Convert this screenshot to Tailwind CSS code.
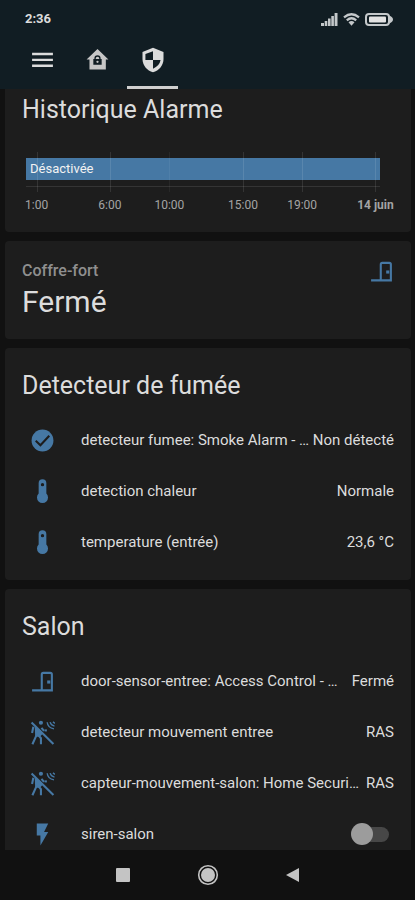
<!DOCTYPE html>
<html lang="fr">
<head>
<meta charset="utf-8">
<meta name="viewport" content="width=device-width, initial-scale=1">
<title>Alarme</title>
<script src="https://cdn.jsdelivr.net/npm/@tailwindcss/browser@4"></script>
</head>
<body class="flex h-screen flex-col overflow-hidden bg-[#111111] font-[Roboto,sans-serif] text-[15px] text-[#dcdcdc]">

<!-- Icon symbols -->
<svg class="hidden" aria-hidden="true">
  <symbol id="door" viewBox="0 0 24 24"><path fill="none" stroke="currentColor" stroke-width="2" d="M2 20.500H22M11.300 20V5.200Q11.300 3.700 12.800 3.700H19.500Q21 3.700 21 5.200V20"/><path fill="currentColor" d="M16.500 11h3v3h-3z"/></symbol>
  <symbol id="thermo" viewBox="0 0 24 24"><path fill="currentColor" fill-rule="evenodd" d="M8.300 4a3.700 3.700 0 0 1 7.400 0v10a5.300 5.300 0 1 1-7.400 0zM12 3.800a1.600 1.600 0 1 0 0 3.200a1.600 1.600 0 0 0 0-3.200z"/></symbol>
  <symbol id="motion-off" viewBox="0 0 24 24">
    <circle cx="10.500" cy="2.600" r="2" fill="currentColor"/>
    <path fill="none" stroke="currentColor" stroke-width="2" d="M1.500 2.500L22.500 23M3.200 6.500L2 12.500M6.500 8V14L2.300 23.300M8 14.500L10.500 17.500V23.300M11 7.500L13.500 10.500"/>
    <path fill="currentColor" d="M4.500 6.500L10 9.500L12.500 13L9.500 16H5z"/>
    <path fill="none" stroke="currentColor" stroke-width="1.300" d="M16.500 2.200Q17 7.500 23 8.500M19.300 2Q20 5 23.500 5.800M22 1.800L24 3.200"/>
    <path fill="currentColor" d="M14 9h2.200v2H14z"/>
  </symbol>
</svg>

<header class="shrink-0 bg-[#111d23]">
  <div class="flex h-9 items-center justify-between pt-0.5 pr-[22px] pl-[25px]">
    <span class="text-[13px] font-bold">2:36</span>
    <div class="flex items-center gap-[5px] text-[#c4c8ca]">
      <svg class="h-[13px] w-[17px]" viewBox="0 0 17 13" fill="currentColor"><path d="M0 10h3v3H0zM3.700 8h2.600v5H3.700zM7 5.500h2.600V13H7zM10.300 3h2.600v10h-2.600zM13.600 0h2.900v13h-2.900z"/></svg>
      <svg class="h-[13px] w-[17px]" viewBox="0 0 17 13"><path fill="none" stroke="currentColor" stroke-width="2.300" d="M1 4.300Q8.500-1.700 16 4.300M3.800 7.300Q8.500 3.300 13.200 7.300"/><path fill="currentColor" d="M5.500 9.200Q8.500 6.900 11.500 9.200L8.500 12.700z"/></svg>
      <svg class="h-[13px] w-[28px]" viewBox="0 0 28 13"><rect x="1" y="1" width="23" height="11" rx="3" fill="none" stroke="currentColor" stroke-width="2"/><rect x="4" y="3.500" width="17" height="6" rx="1" fill="#e2e2e2"/><path fill="currentColor" d="M24 2.500Q28 4 28 6.500T24 10.500z"/></svg>
    </div>
  </div>
  <div class="flex h-[53px] items-stretch pl-[17px] text-[#dcdcdc]">
    <button type="button" aria-label="Menu" class="flex w-[50px] items-center justify-center pb-[6px]">
      <svg class="size-[25px]" viewBox="0 0 24 24" fill="currentColor"><path d="M2 5.500h20v2.300H2zM2 11.200h20v2.300H2zM2 16.900h20v2.300H2z"/></svg>
    </button>
    <nav class="flex pl-[5px]">
      <a href="#maison" aria-label="Maison" class="flex w-[51px] items-center justify-center pb-[6px] text-[#c6c6c6]">
        <svg class="size-[25px]" viewBox="0 0 24 24"><path fill="currentColor" d="M12 2L1.500 12H4.300V21.500H20V12H22.500z"/><path fill="#111d23" d="M8 11.500h1V11a3 3 0 0 1 6 0v.5h1V17H8zm2.300 0h3.400V11a1.700 1.700 0 0 0-3.400 0z"/><circle cx="12" cy="14.200" r="1.100" fill="currentColor"/></svg>
      </a>
      <a href="#alarme" aria-label="Alarme" aria-current="page" class="ml-1 flex w-[51px] items-center justify-center border-b-[3px] border-[#cfcfcf] pb-[3px]">
        <svg class="size-[26px]" viewBox="0 0 24 24"><path fill="currentColor" d="M12 .8L2.300 4.500V11C2.300 17 6.500 21.700 12 23.200C17.500 21.700 21.700 17 21.700 11V4.500z"/><path fill="#111d23" d="M12 4V12H5V6.500zM12 12H19Q18 17.500 12 20z"/></svg>
      </a>
    </nav>
  </div>
</header>

<main class="flex min-h-0 flex-1 flex-col gap-[9px] overflow-hidden pr-1 pl-[5px]">

  <section class="shrink-0 rounded-b-[4px] bg-[#1d1d1d] px-[17px] pt-0.5 pb-[19px]">
    <h2 class="text-[25px] leading-[38px]">Historique Alarme</h2>
    <div class="relative mt-[23px] mr-[14px] ml-1 h-10">
      <div class="absolute inset-x-0 top-[6px] flex h-[22px] items-center bg-[#4678a4] pl-1 text-[13px] text-[#f2f2f2]">Désactivée</div>
      <div class="absolute inset-x-0 top-[34px] h-px bg-white/10"></div>
      <div class="absolute inset-y-0 w-px bg-white/10" style="left:3%"></div>
      <div class="absolute inset-y-0 w-px bg-white/10" style="left:23.7%"></div>
      <div class="absolute inset-y-0 w-px bg-white/5" style="left:40.5%"></div>
      <div class="absolute inset-y-0 w-px bg-white/10" style="left:61.3%"></div>
      <div class="absolute inset-y-0 w-px bg-white/10" style="left:78%"></div>
      <div class="absolute inset-y-0 w-px bg-white/10" style="left:98.7%"></div>
    </div>
    <div class="relative mt-[5px] mr-[14px] ml-1 h-4 text-[12px] leading-4 whitespace-nowrap text-[#a4a4a4]">
      <span class="absolute -translate-x-1/2" style="left:3%">1:00</span>
      <span class="absolute -translate-x-1/2" style="left:23.7%">6:00</span>
      <span class="absolute -translate-x-1/2" style="left:40.5%">10:00</span>
      <span class="absolute -translate-x-1/2" style="left:61.3%">15:00</span>
      <span class="absolute -translate-x-1/2" style="left:78%">19:00</span>
      <span class="absolute -translate-x-1/2 font-bold" style="left:98.7%">14 juin</span>
    </div>
  </section>

  <section class="shrink-0 rounded-[4px] bg-[#1d1d1d] px-[17px] pt-[18px] pb-[18px]">
    <div class="flex h-6 items-center justify-between">
      <h3 class="text-[16px] font-medium text-[#8f8f8f]">Coffre-fort</h3>
      <svg class="size-[25px] text-[#4678a4]"><use href="#door"/></svg>
    </div>
    <p class="text-[30px] leading-[38px]">Fermé</p>
  </section>

  <section class="shrink-0 rounded-[4px] bg-[#1d1d1d] px-[17px] pt-[19px] pb-3">
    <h2 class="mb-[10px] text-[25px] leading-[38px]">Detecteur de fumée</h2>
    <ul>
      <li class="flex h-[51px] items-center">
        <svg class="mx-2 size-[25px] shrink-0 text-[#4678a4]" viewBox="0 0 24 24"><circle cx="12" cy="12" r="10.500" fill="currentColor"/><path fill="none" stroke="#1d1d1d" stroke-width="2" d="M5.500 12.300L10 16.500L18.500 7.500"/></svg>
        <span class="ml-[18px] min-w-0 flex-1 whitespace-nowrap">detecteur fumee: Smoke Alarm - …</span><span class="whitespace-nowrap">Non détecté</span>
      </li>
      <li class="flex h-[51px] items-center">
        <svg class="mx-2 size-[25px] shrink-0 text-[#4678a4]"><use href="#thermo"/></svg>
        <span class="ml-[18px] min-w-0 flex-1 whitespace-nowrap">detection chaleur</span><span class="whitespace-nowrap">Normale</span>
      </li>
      <li class="flex h-[51px] items-center">
        <svg class="mx-2 size-[25px] shrink-0 text-[#4678a4]"><use href="#thermo"/></svg>
        <span class="ml-[18px] min-w-0 flex-1 whitespace-nowrap">temperature (entrée)</span><span class="whitespace-nowrap">23,6 °C</span>
      </li>
    </ul>
  </section>

  <section class="shrink-0 rounded-t-[4px] bg-[#1d1d1d] px-[17px] pt-[19px] pb-3">
    <h2 class="mb-[10px] text-[25px] leading-[38px]">Salon</h2>
    <ul>
      <li class="flex h-[51px] items-center">
        <svg class="mx-2 size-[25px] shrink-0 text-[#4678a4]"><use href="#door"/></svg>
        <span class="ml-[18px] min-w-0 flex-1 whitespace-nowrap">door-sensor-entree: Access Control - …</span><span class="whitespace-nowrap">Fermé</span>
      </li>
      <li class="flex h-[51px] items-center">
        <svg class="mx-2 size-[25px] shrink-0 text-[#4678a4]"><use href="#motion-off"/></svg>
        <span class="ml-[18px] min-w-0 flex-1 whitespace-nowrap">detecteur mouvement entree</span><span class="whitespace-nowrap">RAS</span>
      </li>
      <li class="flex h-[51px] items-center">
        <svg class="mx-2 size-[25px] shrink-0 text-[#4678a4]"><use href="#motion-off"/></svg>
        <span class="ml-[18px] min-w-0 flex-1 whitespace-nowrap">capteur-mouvement-salon: Home Securi…</span><span class="whitespace-nowrap">RAS</span>
      </li>
      <li class="flex h-[51px] items-center">
        <svg class="mx-2 size-[25px] shrink-0 text-[#4678a4]" viewBox="0 0 24 24"><path fill="currentColor" d="M6.500 1.500V13H10V22.500L17.500 9.500H13.500L17.500 1.500z"/></svg>
        <label for="siren" class="ml-[18px] min-w-0 flex-1 whitespace-nowrap">siren-salon</label>
        <input id="siren" type="checkbox" role="switch" class="relative mr-[5px] h-[15px] w-[37px] appearance-none rounded-full bg-[#474747] before:absolute before:-top-1 before:-left-px before:size-[22px] before:rounded-full before:bg-[#9c9c9c]">
      </li>
    </ul>
  </section>
</main>

<nav aria-label="Système" class="flex h-[50px] shrink-0 items-center justify-center gap-[61px] bg-[#111111] text-[#c4c4c4]">
  <button type="button" aria-label="Applications récentes"><svg class="size-6" viewBox="0 0 24 24"><rect x="5" y="5" width="14" height="14" rx="1" fill="currentColor"/></svg></button>
  <button type="button" aria-label="Accueil"><svg class="size-6" viewBox="0 0 24 24"><circle cx="12" cy="12" r="9.300" fill="none" stroke="currentColor" stroke-width="1.600"/><circle cx="12" cy="12" r="7" fill="currentColor"/></svg></button>
  <button type="button" aria-label="Retour"><svg class="size-6" viewBox="0 0 24 24"><path fill="currentColor" d="M5 12L18 5V19z"/></svg></button>
</nav>
</body>
</html>
